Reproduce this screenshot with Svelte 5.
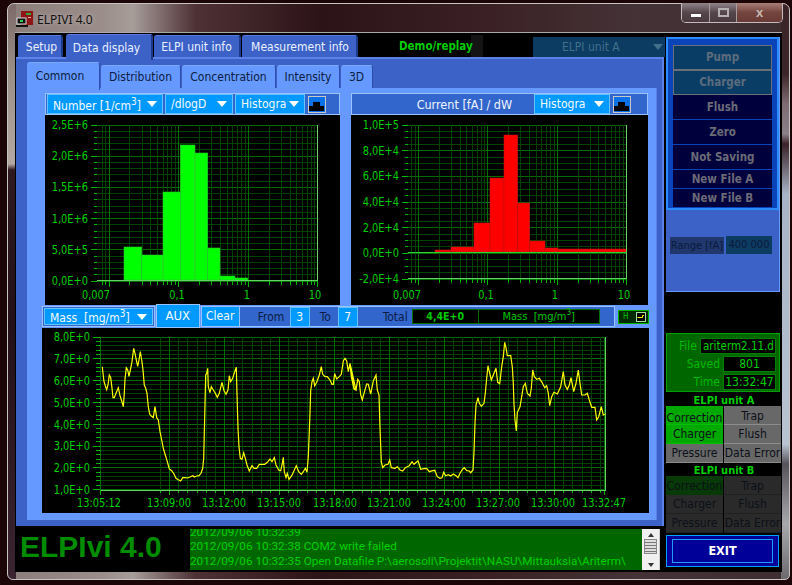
<script>
	// traced from the reference, in crop coordinates (3x), converted to page px below
	const left = [187,125,189,145,192,170,196,182,200,194,204,180,208,150,212,158,216,190,219,218,223,218,228,205,235,188,240,212,245,228,250,245,253,205,255,162,259,128,263,135,267,154,272,130,276,110,281,70,285,85,289,105,293,124,297,105,301,80,305,105,309,135,313,180,317,190,321,205,325,245,329,268,333,272,340,278,345,245,350,278,355,285,360,320,365,345,370,370,376,390,382,410,388,432,395,437,402,447,408,460,415,464,422,468,428,458,435,458,442,459,450,456,458,452,463,456,470,453,477,452,483,445,488,430,491,400,494,275,497,150,500,145,503,130,505,185,510,203,514,185,520,195,526,205,532,217,538,205,546,172,552,197,558,208,564,195,568,152,572,170,578,160,584,140,589,127,591,208,594,310,597,365,601,400,606,403,611,383,616,400,621,420,628,438,636,422,642,430,650,430,658,418,666,418,674,418,682,412,690,402,696,410,703,398,708,420,716,435,722,437,726,420,730,397,733,440,738,458,742,445,747,463,755,452,762,437,769,422,776,440,784,448,790,440,796,430,801,442,805,395,809,290,812,197,816,170,820,160,824,182,830,172,838,150,844,125,848,148,855,155,862,155,870,165,876,178,880,178,884,146,890,162,898,155,904,148,910,108,915,100,920,108,925,140,930,115,935,150,942,190,948,195];
	const right = [0,115,4,155,12,192,18,195,23,163,28,170,32,210,37,225,42,205,50,177,55,178,62,207,70,168,78,150,82,195,87,210,90,310,94,410,98,428,105,420,114,418,119,405,124,428,135,430,142,425,150,435,158,438,166,428,178,422,186,410,192,418,204,407,212,433,222,431,230,430,238,440,248,437,254,436,262,455,270,460,276,458,281,442,287,452,295,449,302,453,310,447,318,452,324,458,330,445,338,432,343,428,350,437,358,438,362,443,369,435,372,380,375,295,378,240,384,218,388,235,394,244,402,235,406,205,410,160,414,122,418,140,424,165,430,150,438,130,443,172,449,176,455,125,460,95,464,52,468,68,472,92,482,92,487,125,490,175,492,237,495,285,499,318,502,262,510,245,515,215,520,185,526,175,532,205,540,213,544,190,548,135,553,155,560,163,568,160,576,172,584,188,590,182,595,205,599,242,605,215,612,202,622,207,632,185,640,140,645,180,652,193,658,180,663,158,671,200,678,175,685,135,690,175,695,210,705,210,712,205,718,225,725,247,735,247,740,285,746,275,754,245,760,270,766,268];

	function toPage(list, ox) {
		let out = [];
		for (let i = 0; i < list.length; i += 2) {
			out.push((ox + list[i] / 3).toFixed(1) + ',' + (325 + list[i + 1] / 3).toFixed(1));
		}
		return out;
	}
	const trace = [...toPage(left, 40), ...toPage(right, 350)].join(' ');

	const round = (v) => Math.round(v) + 0.5;

	function logTicks(x1, decade, from) {
		let out = [];
		for (let e = -3; e < 1; e++) {
			for (let m = 1; m < 10; m++) {
				const v = m * 10 ** e;
				if (v < from) continue;
				out.push({ x: round(x1 + Math.log10(v) * decade), major: m === 1 });
			}
		}
		out.push({ x: round(x1 + decade), major: true });
		return out;
	}

	function rows(top, step, majors, div) {
		let out = [];
		for (let i = 0; i < majors; i++) {
			for (let d = 0; d < div; d++) {
				if (i === majors - 1 && d > 0) break;
				out.push({ y: round(top + (i + d / div) * step), major: d === 0 });
			}
		}
		return out;
	}

	function timeCols() {
		let out = [];
		const start = 169;
		for (let i = -1; i < 58; i++) {
			const x = start + (i * 55) / 6;
			if (x > 604) break;
			out.push({ x: round(x), major: i % 6 === 0 });
		}
		out.unshift({ x: 100.5, major: true });
		out.push({ x: 604.5, major: true });
		return out;
	}

	const number = {
		view: '45 115 295 190',
		x0: 96.5, x1: 317.5, y0: 124.5, y1: 280.5,
		cols: logTicks(247.7, 69.6, 0.008),
		rows: rows(124.5, 31.2, 6, 5),
		yLabels: ['2,5E+6', '2,0E+6', '1,5E+6', '1,0E+6', '5,0E+5', '0,0E+0'],
		labelX: 88,
		xLabels: [['0,007', 96], ['0,1', 177], ['1', 247], ['10', 315]],
		colour: '#00ff00', seam: '#2fc42f', base: 280,
		bars: [[124, 141.7, 247], [141.7, 163, 255], [163, 180.3, 192], [180.3, 195, 145], [195, 207.7, 153], [207.7, 220, 248], [220, 235, 276], [235, 247.7, 278]]
	};
	const current = {
		view: '351 115 297 190',
		x0: 407.5, x1: 626.5, y0: 124.5, y1: 278.5,
		cols: logTicks(556.7, 69.4, 0.008),
		rows: rows(124.5, 25.67, 7, 4),
		yLabels: ['1,0E+5', '8,0E+4', '6,0E+4', '4,0E+4', '2,0E+4', '0,0E+0', '-2,0E+4'],
		labelX: 399,
		xLabels: [['0,007', 407], ['0,1', 486], ['1', 555], ['10', 624]],
		colour: '#ff0000', seam: '#bb1111', base: 252,
		bars: [[435, 451, 250], [451, 474, 247], [474, 490, 223], [490, 504, 178], [504, 517.7, 135], [517.7, 529.7, 203], [529.7, 545, 241], [545, 558, 248], [558, 626, 249]]
	};

	const timeLabels = [['13:05:12', 99], ['13:09:00', 169], ['13:12:00', 224], ['13:15:00', 279], ['13:18:00', 335], ['13:21:00', 389], ['13:24:00', 444], ['13:27:00', 498], ['13:30:00', 553], ['13:32:47', 604]];
	const massLabels = ['8,0E+0', '7,0E+0', '6,0E+0', '5,0E+0', '4,0E+0', '3,0E+0', '2,0E+0', '1,0E+0'];
	const massRows = rows(336.5, 21.8, 8, 5);
	const massCols = timeCols();

	const unitA = [
		['Correction', 'on lower'], ['Trap', 'off low'],
		['Charger', 'on'], ['Flush', 'off'],
		['Pressure', 'off'], ['Data Error', 'off']
	];
	const unitB = [
		['Correction', 'dimgreen low'], ['Trap', 'dim low'],
		['Charger', 'dim'], ['Flush', 'dim'],
		['Pressure', 'dim'], ['Data Error', 'dim']
	];
</script>

{#snippet histogram(p)}
	<svg class="plot" viewBox={p.view}>
		{#each p.rows as r}
			<line x1={p.x0} x2={p.x1} y1={r.y} y2={r.y} class={r.major ? 'major' : 'minor'} />
			<line x1={p.x0 - (r.major ? 6 : 3)} x2={p.x0} y1={r.y} y2={r.y} class="tick" />
		{/each}
		{#each p.cols as c}
			<line x1={c.x} x2={c.x} y1={p.y0} y2={p.y1} class={c.major ? 'major' : 'minor'} />
			<line x1={c.x} x2={c.x} y1={p.y1} y2={p.y1 + (c.major ? 6 : 4)} class="tick" />
		{/each}
		{#each p.bars as b}
			<rect x={b[0]} y={b[2]} width={b[1] - b[0]} height={p.base - b[2]} fill={p.colour} stroke={p.seam} stroke-width="0.6" />
		{/each}
		<line x1={p.x0} x2={p.x1} y1={p.base + 0.5} y2={p.base + 0.5} class={p.base === 252 ? 'zero' : 'edge'} />
		<path d="M{p.x1} {p.y0}V{p.y1}H{p.x0}" class="edge" />
		{#each p.yLabels as label, i}
			<text class="ylab" x={p.labelX} y={p.y0 + 4.5 + (i * (p.y1 - p.y0)) / (p.yLabels.length - 1)} text-anchor="end">{label}</text>
		{/each}
		{#each p.xLabels as l}
			<text x={l[1]} y="299" text-anchor="middle">{l[0]}</text>
		{/each}
	</svg>
{/snippet}

{#snippet select(label, width)}
	<div class="select" style="width: {width}px">
		<span>{@html label}</span>
		<i class="arrow"></i>
	</div>
{/snippet}

{#snippet shape()}
	<svg class="shape" viewBox="0 0 18 17">
		<rect width="18" height="17" fill="#0a72e6" />
		<path d="M0 15V10H5V6H12V10H16V15Z" fill="#000" />
		<rect x="0.5" y="0.5" width="17" height="16" fill="none" stroke="#c8c8c8" />
	</svg>
{/snippet}

{#snippet status(items)}
	<div class="status">
		{#each items as item}
			<div class="lamp {item[1]}">{item[0]}</div>
		{/each}
	</div>
{/snippet}

<div class="desktop">
	<div class="window">
		<header class="caption">
			<svg class="appicon" viewBox="0 0 17 16">
				<rect x="5" y="0" width="12" height="14" fill="#8e1616" />
				<rect x="10" y="2" width="5" height="2" fill="#2fae3a" />
				<rect x="12" y="6" width="3" height="1" fill="#e0b0b0" />
				<rect x="1" y="7" width="9" height="6" fill="#111" stroke="#ddd" stroke-width="1" />
				<rect x="4" y="9" width="3" height="2" fill="#2fd04a" />
				<rect x="0" y="14" width="12" height="2" fill="#111" />
			</svg>
			<span class="title">ELPIVI 4.0</span>
			<div class="winbtns">
				<div class="winbtn min"><i></i></div>
				<div class="winbtn max"><i></i></div>
				<div class="winbtn close">x</div>
			</div>
		</header>

		<div class="client">
			<div class="maincol">
				<div class="toptabs">
					<div class="tab outer setup">Setup</div>
					<div class="tab outer active data">Data display</div>
					<div class="tab outer unit">ELPI unit info</div>
					<div class="tab outer meas">Measurement info</div>
					<div class="demo">Demo/replay</div>
					<div class="unitselect">ELPI unit A<i class="arrow dimmed"></i></div>
				</div>

				<section class="outerpanel">
					<div class="subtabs">
						<div class="tab sub active common">Common</div>
						<div class="tab sub" style="width: 80px">Distribution</div>
						<div class="tab sub" style="width: 94px">Concentration</div>
						<div class="tab sub" style="width: 63px">Intensity</div>
						<div class="tab sub" style="width: 32px">3D</div>
					</div>

					<div class="innerpanel">
						<div class="plots">
							<div class="plotcol first">
								<div class="toolbar">
									{@render select('Number [1/cm<sup>3</sup>]', 116)}
									{@render select('/dlogD', 68)}
									{@render select('Histogra', 70)}
									{@render shape()}
								</div>
								{@render histogram(number)}
							</div>
							<div class="plotcol second">
								<div class="toolbar">
									<span class="caption2">Current [fA] / dW</span>
									{@render select('Histogra', 76)}
									{@render shape()}
								</div>
								{@render histogram(current)}
							</div>
						</div>

						<div class="midbar">
							<div class="massgroup">{@render select('Mass&nbsp; [mg/m<sup>3</sup>]', 110)}</div>
							<div class="aux">AUX</div>
							<div class="clear">Clear</div>
							<div class="range">
								<span class="from">From</span>
								<span class="num">3</span>
								<span class="to">To</span>
								<span class="num">7</span>
								<span class="total">Total</span>
								<span class="totalbox"><b>4,4E+0</b><span>Mass&nbsp; [mg/m<sup>3</sup>]</span></span>
							</div>
							<div class="scalebtn">
								<span>H</span>
								<svg viewBox="0 0 10 10"><rect x="0.5" y="0.5" width="9" height="9" fill="#000" stroke="#9fe09f" /><path d="M1.5 5.5H6.5V3.5H8" stroke="#ffff00" fill="none" /></svg>
							</div>
						</div>

						<svg class="plot mass" viewBox="42 328 607 185">
							{#each massRows as r}
								<line x1="100.5" x2="605" y1={r.y} y2={r.y} class={r.major ? 'major' : 'minor'} />
								<line x1={r.major ? 93 : 96} x2="100.5" y1={r.y} y2={r.y} class="tick" />
							{/each}
							{#each massCols as c}
								<line x1={c.x} x2={c.x} y1="336.5" y2="490" class={c.major ? 'major' : 'minor'} />
								<line x1={c.x} x2={c.x} y1="490" y2={c.major ? 495 : 493} class="tick" />
							{/each}
							<path d="M605.5 336.5V490H100.5" class="edge" />
							<polyline points={trace} class="trace" />
							{#each massLabels as label, i}
								<text class="ylab" x="90" y={341.5 + i * 21.8} text-anchor="end">{label}</text>
							{/each}
							{#each timeLabels as l}
								<text x={l[1]} y="507" text-anchor="middle">{l[0]}</text>
							{/each}
						</svg>
					</div>
				</section>

				<footer class="footer">
					<div class="brand">ELPIvi 4.0</div>
					<div class="log">
						<div class="loglines">
							<div class="clipped">2012/09/06 10:32:39</div>
							<div>2012/09/06 10:32:38 COM2 write failed</div>
							<div>2012/09/06 10:32:35 Open Datafile P:\aerosoli\Projektit\NASU\Mittauksia\Ariterm\</div>
						</div>
						<div class="scroll">
							<i class="up"></i>
							<div class="thumb"></div>
							<i class="down"></i>
						</div>
					</div>
				</footer>
			</div>

			<aside class="sidecol">
				<div class="controlpanel">
					<div class="buttons">
						<div class="cbtn lit">Pump</div>
						<div class="cbtn lit">Charger</div>
						<div class="cbtn">Flush</div>
						<div class="cbtn">Zero</div>
						<div class="cbtn">Not Saving</div>
						<div class="cbtn small">New File A</div>
						<div class="cbtn small">New File B</div>
					</div>
					<div class="rangerow">
						<span class="rlabel">Range [fA]</span>
						<span class="rvalue">400 000</span>
					</div>
				</div>

				<div class="filebox">
					<div class="fline"><label for="f">File</label><span id="f" class="wide">ariterm2.11.d</span></div>
					<div class="fline"><label for="s">Saved</label><span id="s" class="center">801</span></div>
					<div class="fline"><label for="t">Time</label><span id="t" class="center">13:32:47</span></div>
				</div>

				<div class="unitname">ELPI unit A</div>
				{@render status(unitA)}
				<div class="unitname second">ELPI unit B</div>
				{@render status(unitB)}

				<div class="exit"><div>EXIT</div></div>
			</aside>
		</div>
	</div>
</div>

<style>
	:global(body) {
		margin: 0;
		background: #1c0506;
	}
	.desktop {
		width: 792px;
		height: 585px;
		overflow: hidden;
		box-sizing: border-box;
		padding: 3px 2px 5px 7px;
		background: #1c0506;
		font-family: "DejaVu Sans Condensed", "DejaVu Sans", sans-serif;
		font-stretch: condensed;
		font-size: 12px;
	}
	.window {
		height: 100%;
		box-sizing: border-box;
		border: 1px solid #c9c4c4;
		border-radius: 7px 7px 5px 6px;
		padding: 0 7px 7px 7px;
		display: flex;
		flex-direction: column;
		background:
			linear-gradient(180deg, #3c2529 0, #3c2529 70px, #7e6c72 100px, #8a8088 130px, #3a2228 140px, #a7b4c6 190px, #b9c4d2 440px, #56525a 460px, #a8a8ac 520px, #6a686c 577px) right top / 8px 100% no-repeat,
			linear-gradient(180deg, #7c6a68 0, #9b9088 70px, #b4a8a4 160px, #2e1a20 166px, #241018 320px, #3a2430 577px) left top / 8px 100% no-repeat,
			linear-gradient(90deg, #8b7d7a 0, #9b8e8a 12%, #a69c98 16%, #4e3135 24%, #2c1317 40%, #3b2125 62%, #443236 80%, #3e2e32 100%);
	}
	.caption {
		height: 28px;
		flex: none;
		display: flex;
		align-items: flex-start;
	}
	.appicon {
		width: 17px;
		height: 16px;
		margin: 7px 4px 0 1px;
	}
	.title {
		margin-top: 7px;
		color: #111;
		font-family: "Noto Sans", sans-serif;
		font-stretch: normal;
		font-size: 12px;
		text-shadow: 0 0 4px #c8bcbc;
	}
	.winbtns {
		margin-left: auto;
		margin-right: -1px;
		display: flex;
		height: 19px;
		margin-top: -1px;
		border: 1px solid #c4bcbc;
		border-top: none;
		border-radius: 0 0 5px 5px;
		overflow: hidden;
	}
	.winbtn {
		display: flex;
		align-items: center;
		justify-content: center;
		border-right: 1px solid #a49c9c;
		background: linear-gradient(180deg, #90858a, #55464c 50%, #4a3a40);
	}
	.min { width: 27px; }
	.min i {
		width: 10px;
		height: 3px;
		margin-top: 5px;
		background: #fff;
	}
	.max { width: 26px; }
	.max i {
		width: 7px;
		height: 5px;
		border: 2px solid #b6b0b0;
	}
	.close {
		width: 45px;
		border: none;
		color: #c8b8b0;
		font: bold 13px "Liberation Sans", sans-serif;
		background: linear-gradient(180deg, #a88078, #74443e 50%, #6a3a36);
	}

	.client {
		flex: 1;
		display: flex;
		min-height: 0;
		background: #000;
		border-top: 1px solid #aaa;
		margin-right: 0;
	}
	.maincol {
		width: 651px;
		flex: none;
		display: flex;
		flex-direction: column;
		padding-left: 1px;
		box-sizing: border-box;
	}
	.toptabs {
		height: 24px;
		flex: none;
		display: flex;
		align-items: flex-end;
		padding-left: 2px;
		position: relative;
	}
	.tab {
		box-sizing: border-box;
		display: flex;
		align-items: center;
		justify-content: center;
		border-radius: 3px 3px 0 0;
	}
	.tab.outer {
		height: 22px;
		background: #3c62c8;
		color: #eaf0ff;
		font-size: 12px;
		border-top: 1px solid #5678dd;
		border-right: 2px solid #1e3a8a;
		margin-right: 1px;
	}
	.setup { width: 45px; margin-right: 3px !important; padding-left: 4px; }
	.data { width: 87px; height: 26px !important; margin-bottom: -3px; z-index: 1; padding-right: 4px; }
	.unit { width: 87px; }
	.meas { width: 116px; padding-left: 2px; }
	.demo {
		width: 124px;
		box-sizing: border-box;
		height: 22px;
		padding-left: 40px;
		color: #0c0;
		font-weight: bold;
		font-size: 11.5px;
		line-height: 22px;
		background: linear-gradient(90deg, #000 90%, #141414 90%, #141414 100%);
		margin-right: 50px;
	}
	.unitselect {
		width: 132px;
		height: 20px;
		box-sizing: border-box;
		align-self: flex-end;
		margin-bottom: 0;
		padding-left: 29px;
		line-height: 20px;
		background: #0d3c62;
		color: #41708a;
		font-size: 12px;
		position: relative;
	}
	.arrow {
		width: 0;
		height: 0;
		border-left: 5px solid transparent;
		border-right: 5px solid transparent;
		border-top: 6px solid #fff;
		flex: none;
	}
	.arrow.dimmed {
		position: absolute;
		right: 2px;
		top: 7px;
		border-top-color: #41708a;
	}

	.outerpanel {
		width: 648px;
		height: 469px;
		flex: none;
		box-sizing: border-box;
		padding: 3px 5px 6px 11px;
		background: #3c62c8;
		border-top: 2px solid #5c82ea;
		border-right: 2px solid #5c82ea;
		display: flex;
		flex-direction: column;
	}
	.subtabs {
		height: 26px;
		flex: none;
		display: flex;
		align-items: flex-end;
	}
	.tab.sub {
		height: 23px;
		background: #6699ff;
		color: #0a1c44;
		font-size: 12px;
		border-top: 1px solid #7aa8ff;
		border-right: 1px solid #2c4da8;
		margin-right: 1px;
	}
	.common {
		width: 73px;
		height: 28px !important;
		padding: 0 6px 2px 0;
		margin-bottom: -2px;
		z-index: 1;
	}
	.innerpanel {
		flex: 1;
		background: #6699ff;
		padding: 5px 0 7px 15px;
		min-height: 0;
		border-right: 1px solid #5c82ea;
	}
	.plots {
		display: flex;
	}
	.plotcol.first { width: 295px; margin-left: 3px; }
	.plotcol.second { width: 297px; margin-left: 11px; }
	.toolbar {
		height: 22px;
		box-sizing: border-box;
		display: flex;
		align-items: center;
		gap: 2px;
		padding: 0 1px;
		background: #3366cc;
		border: 1px solid #99c2ff;
	}
	.caption2 {
		flex: none;
		width: 179px;
		box-sizing: border-box;
		text-align: right;
		padding-right: 20px;
		color: #f0f4ff;
		font-size: 12.5px;
	}
	.select {
		height: 20px;
		box-sizing: border-box;
		display: flex;
		align-items: center;
		justify-content: space-between;
		padding: 0 5px 0 5px;
		background: #0099ff;
		border: 1px solid #66c2ff;
		color: #f4faff;
		font-size: 12px;
		white-space: nowrap;
	}
	sup {
		font-size: 8px;
		line-height: 0;
	}
	.shape {
		width: 18px;
		height: 17px;
		margin-left: 1px;
	}
	.plot {
		display: block;
		width: 100%;
		height: 190px;
		background: #000;
	}
	.plot line {
		shape-rendering: crispEdges;
		stroke-width: 1;
	}
	.plot .major { stroke: #006e00; }
	.plot .minor { stroke: #004300; }
	.plot .tick { stroke: #00b400; }
	.plot .edge {
		fill: none;
		stroke: #66d066;
		stroke-width: 1;
		shape-rendering: crispEdges;
	}
	.plot .zero { stroke: #2fd02f; }
	.plot text {
		fill: #00d000;
		font-size: 13px;
		font-family: "DejaVu Sans Condensed", "DejaVu Sans", sans-serif;
		font-stretch: condensed;
		transform-box: fill-box;
		transform-origin: center;
		transform: scaleX(0.84);
	}
	.plot text.ylab {
		transform-origin: right center;
	}
	.plot .trace {
		fill: none;
		stroke: #ffff00;
		stroke-width: 1.2;
	}

	.midbar {
		height: 23px;
		display: flex;
		align-items: center;
		width: 607px;
	}
	.massgroup {
		width: 113px;
		height: 21px;
		box-sizing: border-box;
		padding: 1px;
		background: #3366cc;
		border: 1px solid #99c2ff;
		margin-right: 1px;
	}
	.massgroup .select {
		width: 100% !important;
		height: 17px;
	}
	.aux {
		width: 44px;
		height: 24px;
		box-sizing: border-box;
		background: #0099ff;
		border: 1px solid #99c2ff;
		color: #f4faff;
		font-size: 13px;
		text-align: center;
		line-height: 22px;
		margin-bottom: 2px;
	}
	.clear {
		width: 39px;
		height: 21px;
		box-sizing: border-box;
		margin-left: 1px;
		background: #0099ff;
		border: 1px solid #99c2ff;
		color: #f4faff;
		text-align: center;
		line-height: 18px;
		font-size: 12px;
	}
	.range {
		width: 376px;
		height: 21px;
		box-sizing: border-box;
		display: flex;
		align-items: center;
		background: #3366cc;
		border: 1px solid #99c2ff;
		border-left: none;
		color: #0a1c44;
		font-size: 12px;
	}
	.from { margin-left: 18px; width: 32px; }
	.to { margin-left: 10px; width: 18px; }
	.num {
		width: 20px;
		height: 20px;
		box-sizing: border-box;
		background: #0099ff;
		border: 1px solid #66c2ff;
		color: #f4faff;
		text-align: center;
		line-height: 18px;
	}
	.total { margin-left: 25px; width: 29px; }
	.totalbox {
		margin-left: 0;
		width: 188px;
		height: 15px;
		box-sizing: border-box;
		display: flex;
		background: #000;
		border: 1px solid #006e00;
		color: #00c800;
		font-size: 11px;
		line-height: 13px;
	}
	.totalbox b {
		width: 65px;
		text-align: center;
		border-right: 1px solid #006e00;
		font-size: 10.5px;
	}
	.totalbox span {
		flex: 1;
		text-align: center;
	}
	.scalebtn {
		width: 31px;
		height: 14px;
		box-sizing: border-box;
		margin-left: 3px;
		background: #002a00;
		border: 1px solid #00b000;
		display: flex;
		align-items: center;
		justify-content: space-between;
		padding: 0 2px 0 4px;
		color: #00c800;
		font-size: 8px;
	}
	.scalebtn svg {
		width: 10px;
		height: 10px;
	}
	.plot.mass {
		width: 607px;
		height: 185px;
	}

	.footer {
		flex: 1;
		display: flex;
		min-height: 0;
		padding-top: 3px;
		box-sizing: border-box;
	}
	.brand {
		width: 174px;
		box-sizing: border-box;
		padding: 0 0 0 4px;
		color: #008c00;
		font: bold 30px/36px "Liberation Sans", sans-serif;
	}
	.log {
		width: 470px;
		height: 41px;
		display: flex;
		background: #006600;
		color: #00d000;
		overflow: hidden;
	}
	.loglines {
		flex: 1;
		font-family: "Roboto", "Liberation Sans", sans-serif;
		font-stretch: normal;
		font-size: 11.75px;
		line-height: 15px;
		white-space: nowrap;
		margin-top: -3px;
	}
	.loglines .clipped { line-height: 13px; }
	.scroll {
		width: 18px;
		background: #f0f0f0;
		border-right: 1px solid #ccc;
		display: flex;
		flex-direction: column;
		align-items: center;
		justify-content: space-between;
		box-sizing: border-box;
		padding: 4px 0 3px;
	}
	.scroll .up {
		border: 3px solid transparent;
		border-bottom: 4px solid #333;
		border-top: none;
	}
	.scroll .down {
		border: 3px solid transparent;
		border-top: 4px solid #333;
		border-bottom: none;
	}
	.thumb {
		width: 13px;
		height: 15px;
		margin-bottom: 8px;
		border: 1px solid #888;
		box-sizing: border-box;
		background: repeating-linear-gradient(180deg, #ddd 0 2px, #777 2px 3px);
	}

	.sidecol {
		flex: 1;
		min-width: 0;
		display: flex;
		flex-direction: column;
		padding-left: 0;
	}
	.controlpanel {
		width: 114px;
		height: 255px;
		flex: none;
		margin-top: 4px;
		box-sizing: border-box;
		background: #3c62c8;
		border-right: 1px solid #6699ff;
		border-bottom: 1px solid #6699ff;
	}
	.buttons {
		width: 113px;
		height: 173px;
		box-sizing: border-box;
		padding: 6px 5px 3px;
		background: #0a44b8;
		border: 2px solid #2a8cff;
		display: flex;
		flex-direction: column;
		gap: 1px;
	}
	.cbtn {
		height: 24px;
		flex: none;
		box-sizing: border-box;
		background: #00003c;
		color: #6b6b78;
		text-align: center;
		font-weight: bold;
		font-size: 11.5px;
		line-height: 24px;
	}
	.cbtn.lit {
		height: 25px;
		margin-bottom: -1px;
		background: #0a3d66;
		border: 1px solid #6b6f78;
		line-height: 23px;
		color: #5c6c7c;
	}
	.cbtn.small {
		height: 18px;
		line-height: 18px;
	}
	.rangerow {
		display: flex;
		align-items: flex-start;
		gap: 2px;
		padding: 26px 0 0 4px;
	}
	.rlabel {
		width: 54px;
		height: 17px;
		margin-top: 1px;
		background: #20386e;
		color: #0a1a3c;
		text-align: center;
		font-size: 11px;
		line-height: 17px;
	}
	.rvalue {
		width: 46px;
		height: 18px;
		background: #0d3c62;
		color: #0a1a3c;
		text-align: center;
		font-size: 11px;
		line-height: 18px;
	}
	.filebox {
		width: 114px;
		height: 59px;
		flex: none;
		box-sizing: border-box;
		margin-top: 41px;
		padding: 3px 3px 0 0;
		background: #006600;
		border: 1px solid #00a000;
	}
	.fline {
		height: 18px;
		display: flex;
		align-items: center;
		justify-content: flex-end;
		color: #00b800;
		font-size: 12px;
	}
	.fline label {
		margin-right: 3px;
	}
	.fline span {
		height: 16px;
		box-sizing: border-box;
		background: #000;
		border: 1px solid #008000;
		color: #00d000;
		line-height: 14px;
	}
	.fline .wide {
		width: 76px;
		padding-left: 2px;
		font-size: 11.5px;
		overflow: hidden;
		white-space: nowrap;
	}
	.fline .center {
		width: 53px;
		text-align: center;
	}
	.unitname {
		height: 14px;
		margin-top: 0;
		color: #00d000;
		font-weight: bold;
		font-size: 11px;
		line-height: 18px;
		text-align: center;
	}
	.unitname.second {
		height: 13px;
		line-height: 16px;
	}
	.status {
		width: 115px;
		display: grid;
		grid-template-columns: 57px 57px;
		grid-auto-rows: 19px;
		column-gap: 1px;
	}
	.lamp {
		box-sizing: border-box;
		text-align: center;
		font-size: 12px;
		line-height: 18px;
		white-space: nowrap;
		overflow: hidden;
		border-bottom: 1px solid #555;
		color: #0c1018;
	}
	.lamp.low { padding-top: 1px; }
	.lamp.lower { padding-top: 3px; }
	.lamp.on { background: #00a800; border-color: #00c000; }
	.lamp.off { background: #686868; border-color: #8c8c8c; }
	.lamp.dim { background: #2a2a2a; border-color: #202020; }
	.lamp.dimgreen { background: #073a07; border-color: #073a07; }
	.exit {
		width: 113px;
		height: 32px;
		flex: none;
		box-sizing: border-box;
		margin-top: 2px;
		padding: 3px 5px;
		background: #000099;
		border: 1px solid #00a0ff;
	}
	.exit div {
		height: 100%;
		box-sizing: border-box;
		border: 1px solid #1e9cff;
		color: #fff;
		font-weight: bold;
		font-size: 12.5px;
		line-height: 22px;
		text-align: center;
	}
</style>
